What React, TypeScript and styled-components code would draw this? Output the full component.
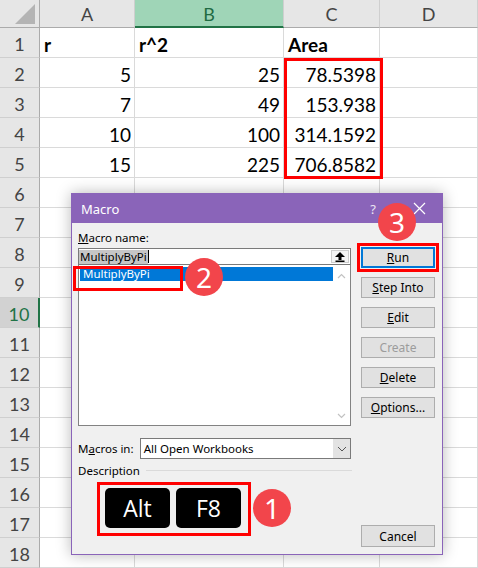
import React from "react";
import styled, { createGlobalStyle } from "styled-components";

const GlobalStyle = createGlobalStyle`
  html, body {
    margin: 0;
    padding: 0;
    background: #ffffff;
  }
  body {
    overflow: hidden;
  }
`;

const Page = styled.div`
  position: relative;
  width: 478px;
  height: 568px;
  overflow: hidden;
  font-family: Lato, "Noto Sans", sans-serif;
`;

/* ---------- spreadsheet ---------- */

const Sheet = styled.div`
  display: grid;
  grid-template-columns: 40px 95px 149px 96px 98px;
  grid-template-rows: 28px repeat(18, 30px);
`;

const Corner = styled.div`
  box-sizing: border-box;
  background: #e6e6e6;
  border-right: 1px solid #ababab;
  border-bottom: 1px solid #ababab;
  display: flex;
  align-items: flex-end;
  justify-content: flex-end;
  padding: 0 4px 3px 0;
`;

const ColHead = styled.div<{ $active?: boolean }>`
  box-sizing: border-box;
  background: ${(p) => (p.$active ? "#9fd5b7" : "#e6e6e6")};
  color: ${(p) => (p.$active ? "#1f6b43" : "#444444")};
  border-right: 1px solid #cfcfcf;
  border-bottom: ${(p) => (p.$active ? "2px solid #217346" : "1px solid #ababab")};
  display: flex;
  align-items: center;
  justify-content: center;
  font-size: 18px;
  padding-top: ${(p) => (p.$active ? "1px" : "0")};
`;

const RowHead = styled.div<{ $active?: boolean }>`
  box-sizing: border-box;
  background: ${(p) => (p.$active ? "#d2d2d2" : "#e6e6e6")};
  color: ${(p) => (p.$active ? "#217346" : "#444444")};
  border-right: ${(p) => (p.$active ? "2px solid #217346" : "1px solid #ababab")};
  border-bottom: 1px solid #cfcfcf;
  display: flex;
  align-items: center;
  justify-content: center;
  font-size: 18px;
  padding-top: 2px;
`;

const Cell = styled.div<{ $align?: "left" | "right"; $bold?: boolean }>`
  box-sizing: border-box;
  border-right: 1px solid #dadada;
  border-bottom: 1px solid #dadada;
  display: flex;
  align-items: center;
  justify-content: ${(p) => (p.$align === "right" ? "flex-end" : "flex-start")};
  padding: 3px 3px 0 4px;
  font-size: 19px;
  font-weight: ${(p) => (p.$bold ? 700 : 400)};
  color: #000;
`;

/* ---------- dialog ---------- */

const Dialog = styled.div`
  position: absolute;
  left: 71px;
  top: 193px;
  width: 372px;
  height: 362px;
  box-sizing: border-box;
  border: 1px solid #8a64b9;
  background: #f0f0f0;
  box-shadow: 0 0 14px rgba(0, 0, 0, 0.28);
  display: flex;
  flex-direction: column;
  font-family: "Noto Sans", sans-serif;
  font-size: 11.5px;
  color: #000;
`;

const TitleBar = styled.div`
  height: 29px;
  flex: none;
  background: #8a64b9;
  color: #ffffff;
  display: flex;
  align-items: center;
  padding-left: 9px;
  font-size: 13px;
`;

const Help = styled.span`
  margin-left: auto;
  width: 14px;
  text-align: center;
  font-size: 13px;
  color: #ece6f4;
`;

const Close = styled.span`
  width: 46px;
  margin-left: 16px;
  display: flex;
  justify-content: center;
`;

const Body = styled.div`
  flex: 1;
  display: grid;
  grid-template-columns: 273px 74px;
  column-gap: 10px;
  padding: 7px 7px 7px 6px;
`;

const LeftCol = styled.div`
  display: flex;
  flex-direction: column;
`;

const RightCol = styled.div`
  display: flex;
  flex-direction: column;
  gap: 9px;
  padding-top: 17px;
`;

const Label = styled.div`
  height: 16px;
  line-height: 16px;
  margin-bottom: 2px;
`;

const NameInput = styled.div`
  box-sizing: border-box;
  height: 17px;
  border: 1px solid #7a7a7a;
  background: #fff;
  display: flex;
  align-items: center;
`;

const Selected = styled.span`
  background: #c6c6c6;
  line-height: 14px;
  padding: 0 1px;
`;

const Caret = styled.span`
  width: 1px;
  height: 13px;
  background: #000;
`;

const ArrowBtn = styled.span`
  box-sizing: border-box;
  margin-left: auto;
  margin-right: 1px;
  width: 18px;
  height: 13px;
  border: 1px solid #cdcdcd;
  background: #f4f4f4;
  display: flex;
  align-items: center;
  justify-content: center;
`;

const ListBox = styled.div`
  box-sizing: border-box;
  height: 161px;
  border: 1px solid #828282;
  border-top: none;
  background: #fff;
  display: flex;
`;

const Items = styled.div`
  flex: 1;
  padding-top: 2px;
`;

const Item = styled.div<{ $selected?: boolean }>`
  height: 14px;
  line-height: 14px;
  padding-left: 3px;
  margin-left: 1px;
  background: ${(p) => (p.$selected ? "#0078d7" : "transparent")};
  color: ${(p) => (p.$selected ? "#fff" : "#000")};
`;

const ScrollTrack = styled.div`
  width: 17px;
  display: flex;
  flex-direction: column;
  justify-content: space-between;
  align-items: center;
  padding: 8px 0 6px;
`;

const FieldRow = styled.div`
  display: flex;
  align-items: center;
  margin-top: 12px;
  height: 21px;
`;

const FieldLabel = styled.span`
  width: 62px;
`;

const Select = styled.div`
  box-sizing: border-box;
  width: 212px;
  height: 21px;
  border: 1px solid #7a7a7a;
  background: #fff;
  display: flex;
  align-items: center;
  padding-left: 3px;
`;

const DropBtn = styled.span`
  margin-left: auto;
  width: 17px;
  height: 19px;
  background: #e3e3e3;
  display: flex;
  align-items: center;
  justify-content: center;
`;

const DescRow = styled.div`
  display: flex;
  align-items: center;
  margin-top: 4px;
  height: 14px;
  width: 274px;
`;

const Rule = styled.span`
  flex: 1;
  height: 1px;
  background: #dadada;
  margin-left: 6px;
`;

const KeysBox = styled.div`
  box-sizing: border-box;
  width: 154px;
  height: 54px;
  margin: 5px 0 0 19px;
  border: 3px solid #ff0000;
  padding: 3px 0 0 5px;
  display: flex;
  gap: 6px;
`;

const Key = styled.div`
  width: 65px;
  height: 40px;
  border-radius: 5px;
  background: #000;
  color: #fff;
  display: flex;
  align-items: center;
  justify-content: center;
  font-family: "Open Sans", sans-serif;
  font-size: 23px;
`;

const Button = styled.div<{ $focused?: boolean; $disabled?: boolean }>`
  box-sizing: border-box;
  height: 21px;
  background: #e1e1e1;
  border: ${(p) => (p.$focused ? "2px solid #0078d7" : "1px solid #adadad")};
  outline: ${(p) => (p.$focused ? "3px solid #ff0000" : "none")};
  outline-offset: 1px;
  color: ${(p) => (p.$disabled ? "#9c9c9c" : "#000")};
  display: flex;
  align-items: center;
  justify-content: center;
  font-size: 12px;
`;

const CancelButton = styled(Button)`
  margin-top: auto;
  height: 22px;
`;

/* ---------- annotations ---------- */

const Marker = styled.div<{ $x: number; $y: number; $w: number; $h: number }>`
  position: absolute;
  box-sizing: border-box;
  left: ${(p) => p.$x}px;
  top: ${(p) => p.$y}px;
  width: ${(p) => p.$w}px;
  height: ${(p) => p.$h}px;
  border: 3px solid #ff0000;
  pointer-events: none;
`;

const Badge = styled.div<{ $cx: number; $cy: number }>`
  position: absolute;
  left: ${(p) => p.$cx - 19}px;
  top: ${(p) => p.$cy - 19}px;
  width: 38px;
  height: 38px;
  border-radius: 50%;
  background: #f2454b;
  color: #fff;
  display: flex;
  align-items: center;
  justify-content: center;
  font-family: "Noto Sans", sans-serif;
  font-size: 28px;
  line-height: 1;
`;

const Chevron = ({ up }: { up?: boolean }) => (
  <svg width="9" height="6" viewBox="0 0 9 6">
    <polyline
      points={up ? "1,5 4.5,1.5 8,5" : "1,1 4.5,4.5 8,1"}
      fill="none"
      stroke="#c2c2c2"
      strokeWidth="1.2"
    />
  </svg>
);

const rows: [string, string, string, string][] = [
  ["1", "r", "r^2", "Area"],
  ["2", "5", "25", "78.5398"],
  ["3", "7", "49", "153.938"],
  ["4", "10", "100", "314.1592"],
  ["5", "15", "225", "706.8582"],
];

export default function App() {
  const rowNums = Array.from({ length: 18 }, (_, i) => i + 1);
  return (
    <Page>
      <GlobalStyle />
      <Sheet>
        <Corner>
          <svg width="20" height="20" viewBox="0 0 20 20">
            <polygon points="20,0 20,20 0,20" fill="#b4b4b4" />
          </svg>
        </Corner>
        <ColHead>A</ColHead>
        <ColHead $active>B</ColHead>
        <ColHead>C</ColHead>
        <ColHead>D</ColHead>
        {rowNums.map((n) => {
          const data = rows[n - 1];
          const header = n === 1;
          return (
            <React.Fragment key={n}>
              <RowHead $active={n === 10}>{n}</RowHead>
              <Cell $align={header ? "left" : "right"} $bold={header}>
                {data ? data[1] : ""}
              </Cell>
              <Cell $align={header ? "left" : "right"} $bold={header}>
                {data ? data[2] : ""}
              </Cell>
              <Cell $align={header ? "left" : "right"} $bold={header}>
                {data ? data[3] : ""}
              </Cell>
              <Cell />
            </React.Fragment>
          );
        })}
      </Sheet>

      <Marker $x={284} $y={58} $w={99} $h={121} />

      <Dialog>
        <TitleBar>
          Macro
          <Help>?</Help>
          <Close>
            <svg width="13" height="13" viewBox="0 0 13 13">
              <path d="M1 1 L12 12 M12 1 L1 12" stroke="#fff" strokeWidth="1.2" />
            </svg>
          </Close>
        </TitleBar>
        <Body>
          <LeftCol>
            <Label>
              <u>M</u>acro name:
            </Label>
            <NameInput>
              <Selected>MultiplyByPi</Selected>
              <Caret />
              <ArrowBtn>
                <svg width="10" height="10" viewBox="0 0 10 10">
                  <polygon points="5,0 10,5 0,5" fill="#000" />
                  <rect x="3.5" y="4" width="3" height="4" fill="#000" />
                  <rect x="0.5" y="8.5" width="9" height="1.5" fill="#000" />
                </svg>
              </ArrowBtn>
            </NameInput>
            <ListBox>
              <Items>
                <Item $selected>MultiplyByPi</Item>
              </Items>
              <ScrollTrack>
                <Chevron up />
                <Chevron />
              </ScrollTrack>
            </ListBox>
            <FieldRow>
              <FieldLabel>
                M<u>a</u>cros in:
              </FieldLabel>
              <Select>
                All Open Workbooks
                <DropBtn>
                  <svg width="10" height="6" viewBox="0 0 10 6">
                    <polyline points="1,1 5,5 9,1" fill="none" stroke="#555" strokeWidth="1" />
                  </svg>
                </DropBtn>
              </Select>
            </FieldRow>
            <DescRow>
              Description
              <Rule />
            </DescRow>
            <KeysBox>
              <Key>Alt</Key>
              <Key>F8</Key>
            </KeysBox>
          </LeftCol>
          <RightCol>
            <Button $focused>
              <u>R</u>un
            </Button>
            <Button>
              <u>S</u>tep Into
            </Button>
            <Button>
              <u>E</u>dit
            </Button>
            <Button $disabled>Create</Button>
            <Button>
              <u>D</u>elete
            </Button>
            <Button>
              <u>O</u>ptions...
            </Button>
            <CancelButton>Cancel</CancelButton>
          </RightCol>
        </Body>
      </Dialog>

      <Marker $x={73} $y={266} $w={110} $h={25} />
      <Badge $cx={204} $cy={277}>2</Badge>
      <Badge $cx={397} $cy={222}>3</Badge>
      <Badge $cx={272} $cy={508}>1</Badge>
    </Page>
  );
}
